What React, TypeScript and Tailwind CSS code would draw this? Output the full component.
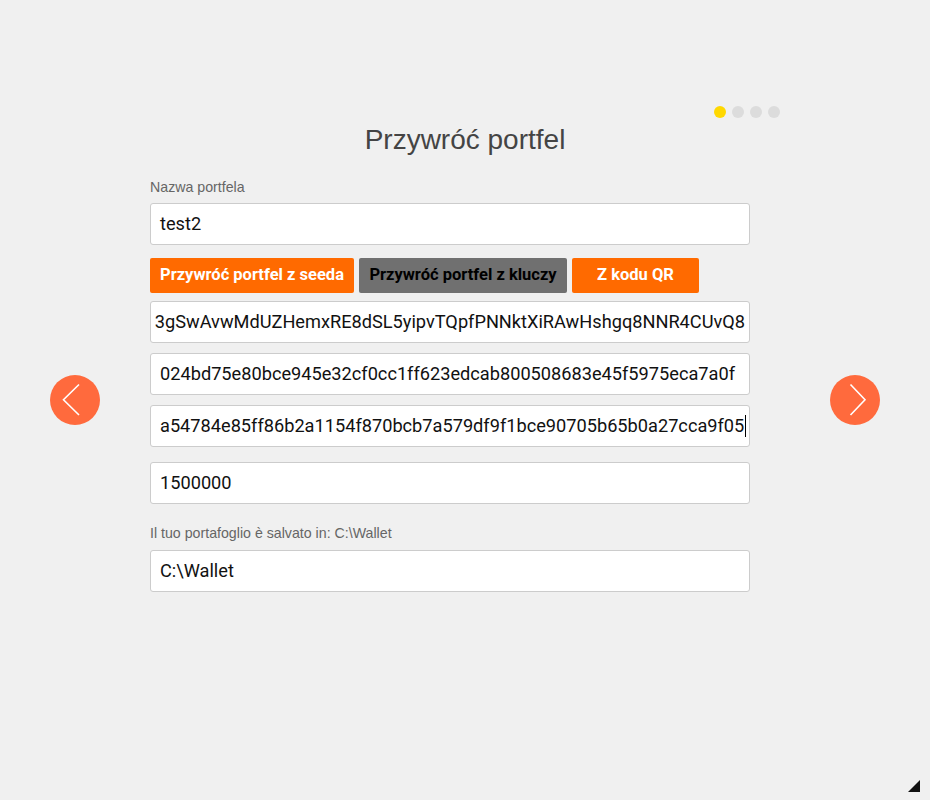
import React from "react";

const inputCls =
  "h-[42px] w-full rounded-[3px] border border-[#cccccc] bg-white px-[9px] flex items-center overflow-hidden whitespace-nowrap text-[18.2px] text-[#111] font-['Roboto',sans-serif]";

const btnCls = "h-[35px] rounded-[2px] text-[16.5px] font-bold font-['Roboto',sans-serif]";

const Arrow: React.FC<{ dir: "left" | "right" }> = ({ dir }) => (
  <button className="w-[50px] h-[50px] rounded-full bg-[#ff6a3d] flex items-center justify-center">
    <svg width="50" height="50" viewBox="0 0 50 50">
      {dir === "left" ? (
        <polyline points="29,9.5 13.5,24.8 29,40" fill="none" stroke="#fff" strokeWidth="1.6" />
      ) : (
        <polyline points="20.5,9.5 35,24.8 20.5,40" fill="none" stroke="#fff" strokeWidth="1.6" />
      )}
    </svg>
  </button>
);

const App: React.FC = () => {
  return (
    <div className="relative w-full h-[800px] bg-[#f0f0f0] font-['Liberation_Sans',Arial,sans-serif] overflow-hidden">
      <div className="flex justify-end gap-[6px] pt-[106px] pr-[150px]">
        <span className="w-3 h-3 rounded-full bg-[#ffd800]" />
        <span className="w-3 h-3 rounded-full bg-[#dcdcdc]" />
        <span className="w-3 h-3 rounded-full bg-[#dcdcdc]" />
        <span className="w-3 h-3 rounded-full bg-[#dcdcdc]" />
      </div>

      <h1 className="mt-[6px] text-center text-[28px] leading-[32px] text-[#444]">
        Przywróć portfel
      </h1>

      <div className="ml-[150px] w-[600px] mt-[23px]">
        <label className="block text-[14.2px] leading-[16px] text-[#666]">Nazwa portfela</label>
        <div className={inputCls + " mt-[8px]"}>test2</div>

        <div className="flex gap-[5px] mt-[13px]">
          <button className={btnCls + " w-[204px] bg-[#ff6a00] text-white"}>
            Przywróć portfel z seeda
          </button>
          <button className={btnCls + " w-[208px] bg-[#707070] text-black"}>
            Przywróć portfel z kluczy
          </button>
          <button className={btnCls + " w-[127px] bg-[#ff6a00] text-white"}>
            Z kodu QR
          </button>
        </div>

        <div className="flex flex-col gap-[10px] mt-[8px]">
          <div className={inputCls + " justify-end pr-[4px]"}>
            3gSwAvwMdUZHemxRE8dSL5yipvTQpfPNNktXiRAwHshgq8NNR4CUvQ8
          </div>
          <div className={inputCls}>
            024bd75e80bce945e32cf0cc1ff623edcab800508683e45f5975eca7a0f
          </div>
          <div className={inputCls + " pr-[4px]"}>
            a54784e85ff86b2a1154f870bcb7a579df9f1bce90705b65b0a27cca9f05
            <span className="inline-block w-px h-[22px] bg-black ml-px shrink-0" />
          </div>
        </div>

        <div className={inputCls + " mt-[15px]"}>1500000</div>

        <label className="block mt-[21px] text-[14.2px] leading-[16px] text-[#666]">
          Il tuo portafoglio è salvato in: C:\Wallet
        </label>
        <div className={inputCls + " mt-[9px]"}>C:\Wallet</div>
      </div>

      <div className="absolute left-[50px] top-[375px]">
        <Arrow dir="left" />
      </div>
      <div className="absolute left-[830px] top-[375px]">
        <Arrow dir="right" />
      </div>

      <svg className="absolute right-[10px] bottom-[8px]" width="12" height="12" viewBox="0 0 12 12">
        <polygon points="12,0 12,12 0,12" fill="#111" />
      </svg>
    </div>
  );
};

export default App;
